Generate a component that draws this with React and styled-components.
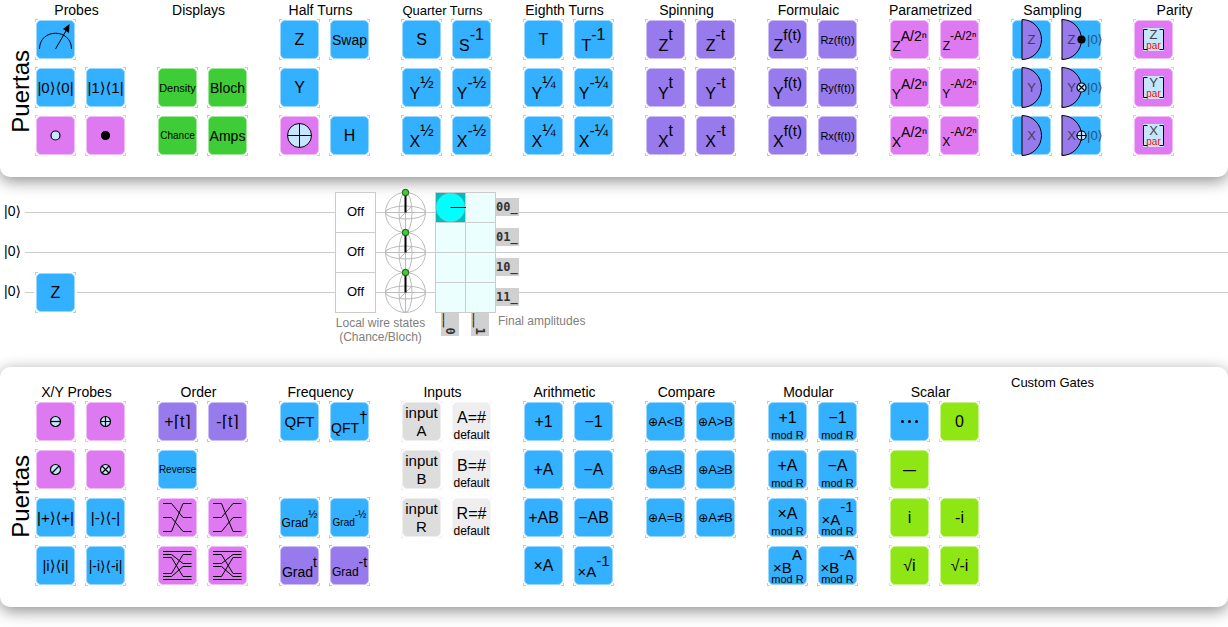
import React from "react";
import styled, { createGlobalStyle, css } from "styled-components";

const GlobalStyle = createGlobalStyle`
  *, *::before, *::after { box-sizing: border-box; }
  body {
    margin: 0;
    background: #fff;
    color: #000;
    font-family: "Liberation Sans", "DejaVu Sans", sans-serif;
    overflow-x: hidden;
  }
`;

const palette = {
  blue: { fill: "#33b0ff", edge: "#99d7ff" },
  purple: { fill: "#977aeb", edge: "#cbbcf5" },
  pink: { fill: "#df79f2", edge: "#efbcf8" },
  green: { fill: "#3ecd36", edge: "#9ee69a" },
  lime: { fill: "#8fe615", edge: "#c7f28a" },
  gray: { fill: "#dddddd", edge: "#eeeeee" },
  pale: { fill: "#eeeeee", edge: "#f6f6f6" },
};

/* ---------- page structure ---------- */

const Page = styled.main`
  display: flex;
  flex-direction: column;
  padding-bottom: 20px;
`;

const Panel = styled.section`
  display: flex;
  background: #fff;
  border-radius: ${(p) => (p.$top ? "0 0 10px 10px" : "10px")};
  padding: ${(p) => (p.$top ? "0 0 21px" : "5px 0 21px")};
  box-shadow: 0 4px 16px rgba(0, 0, 0, 0.45);
`;

const Rail = styled.h2`
  flex: none;
  display: flex;
  align-items: center;
  justify-content: center;
  width: 35px;
  margin: 0;
  padding: ${(p) => (p.$top ? 26 : 34)}px 0 0 7px;
  font-size: 24px;
  line-height: 28px;
  font-weight: 400;
`;

const RailText = styled.span`
  writing-mode: vertical-rl;
  transform: rotate(180deg);
`;

const Groups = styled.div`
  display: flex;
  gap: 31px;
  padding-top: ${(p) => (p.$top ? "0" : "10px")};
`;

const Group = styled.section`
  flex: none;
  width: 91px;
`;

const GroupTitle = styled.h3`
  display: flex;
  justify-content: ${(p) => (p.$start ? "flex-start" : "center")};
  margin: ${(p) => (p.$start ? "-10px 0 0" : "0 8px 0 0")};
  padding-top: 2px;
  font-size: ${(p) => (p.$small ? 13 : 14)}px;
  line-height: 17px;
  font-weight: 400;
  white-space: nowrap;
`;

const GateGrid = styled.div`
  display: grid;
  grid-template-columns: repeat(2, 41px);
  grid-auto-rows: 41px;
  gap: 7px 9px;
`;

/* ---------- gates ---------- */

const ticks = css`
  background:
    linear-gradient(90deg, ${(p) => p.$c.edge} 3px, transparent 3px calc(100% - 3px), ${(p) => p.$c.edge} 0) top / 100% 1px no-repeat,
    linear-gradient(90deg, ${(p) => p.$c.edge} 3px, transparent 3px calc(100% - 3px), ${(p) => p.$c.edge} 0) bottom / 100% 1px no-repeat,
    linear-gradient(${(p) => p.$c.edge} 3px, transparent 3px calc(100% - 3px), ${(p) => p.$c.edge} 0) left / 1px 100% no-repeat,
    linear-gradient(${(p) => p.$c.edge} 3px, transparent 3px calc(100% - 3px), ${(p) => p.$c.edge} 0) right / 1px 100% no-repeat,
    #fff;
`;

const GateButton = styled.button`
  display: flex;
  width: 41px;
  height: 41px;
  padding: 1px;
  border: 0;
  color: #000;
  font-family: inherit;
  cursor: grab;
  ${ticks}
`;

const Face = styled.span`
  flex: 1;
  min-width: 0;
  height: 39px;
  display: flex;
  flex-direction: column;
  align-items: center;
  justify-content: center;
  border: 1px solid ${(p) => p.$c.edge};
  border-radius: 5px;
  background: ${(p) => p.$c.fill};
  white-space: nowrap;
`;

const Label = styled.span`
  font-size: ${(p) => p.$size}px;
  line-height: 18px;
  font-weight: ${(p) => (p.$bold ? 700 : 400)};
`;

const Small = styled.span`
  font-size: 12px;
`;

const Power = styled.span`
  display: flex;
  align-items: flex-start;
  padding-top: 2px;
  margin-bottom: ${(p) => (p.$tight ? -2 : 0)}px;
  line-height: 16px;
`;

const Base = styled.span`
  margin-top: ${(p) => p.$drop}px;
  font-size: ${(p) => p.$size}px;
`;

const Exponent = styled.span`
  font-size: ${(p) => p.$size}px;
`;

const Stack = styled.span`
  flex: 1;
  min-height: 0;
  display: flex;
  flex-direction: column;
  align-items: center;
  justify-content: flex-end;
`;

const StackMain = styled.span`
  display: flex;
  font-size: ${(p) => p.$size}px;
  line-height: ${(p) => (p.$even ? 18 : 24)}px;
`;

const StackNote = styled.span`
  font-size: ${(p) => p.$size}px;
  line-height: 10px;
`;

const Drawing = styled.svg`
  display: block;
  flex: none;
  overflow: visible;
  font-family: "Liberation Sans", "DejaVu Sans", sans-serif;
`;

function Gate({ color, name, children }) {
  const c = palette[color];
  return (
    <GateButton type="button" $c={c} aria-label={name}>
      <Face $c={c}>{children}</Face>
    </GateButton>
  );
}

const text = (color, value, size = 16, bold = false) => (
  <Gate color={color}>
    <Label $size={size} $bold={bold}>{value}</Label>
  </Gate>
);

const power = (color, base, exp, size = 16, expSize = 16, drop = 11) => (
  <Gate color={color}>
    <Power>
      <Base $size={size} $drop={drop}>{base}</Base>
      <Exponent $size={expSize}>{exp}</Exponent>
    </Power>
  </Gate>
);

const modular = (value) => (
  <Gate color="blue">
    <Stack>
      <StackMain $size={16}>{value}</StackMain>
      <StackNote $size={11}>mod R</StackNote>
    </Stack>
  </Gate>
);

const modularPower = (base, exp) => (
  <Gate color="blue">
    <Stack>
      <Power $tight>
        <Base $size={15} $drop={13}>{base}</Base>
        <Exponent $size={15}>{exp}</Exponent>
      </Power>
      <StackNote $size={11}>mod R</StackNote>
    </Stack>
  </Gate>
);

const input = (letter) => (
  <Gate color="gray">
    <StackMain $even $size={15}>input</StackMain>
    <StackMain $even $size={15}>{letter}</StackMain>
  </Gate>
);

const inputDefault = (letter) => (
  <Gate color="pale">
    <Stack>
      <StackMain $size={16}>{letter}=#</StackMain>
      <StackNote $size={12}>default</StackNote>
    </Stack>
  </Gate>
);

const compare = (rest) => (
  <Gate color="blue">
    <Label $size={13}><Small>⊕</Small>{rest}</Label>
  </Gate>
);

const controlMarks = {
  empty: "",
  minus: "M-5 0H5",
  plus: "M-5 0H5M0 -5V5",
  slash: "M-3.5 3.5L3.5 -3.5",
  cross: "M-3.5 3.5L3.5 -3.5M-3.5 -3.5L3.5 3.5",
};

function ControlMark({ kind, r = 5 }) {
  return (
    <g stroke="#000" strokeWidth="1.2" fill="none">
      <circle r={kind === "full" ? r - 1 : r} fill={kind === "full" ? "#000" : "#c4e7ff"} />
      {kind !== "full" && <path d={controlMarks[kind]} />}
    </g>
  );
}

const control = (kind, name) => (
  <Gate color="pink" name={name}>
    <Drawing width="37" height="37" viewBox="-18.5 -18.5 37 37" aria-hidden="true">
      <ControlMark kind={kind} r={kind === "empty" ? 4.5 : 5} />
    </Drawing>
  </Gate>
);

const wiring = (name, d) => (
  <Gate color="pink" name={name}>
    <Drawing width="37" height="37" viewBox="0 0 37 37" aria-hidden="true">
      <path d={d} fill="none" stroke="#000" strokeWidth="1" />
    </Drawing>
  </Gate>
);

const detector = (axis) => (
  <Gate color="blue" name={`${axis} detector`}>
    <Drawing width="37" height="37" viewBox="2 2 37 37">
      <path d="M11 0.5A19.5 20 0 0 1 11 40.5Z" fill={palette.purple.fill} stroke="#000" />
      <text x="20.5" y="25" fontSize="13" textAnchor="middle" fill="#443c5c">{axis}</text>
    </Drawing>
  </Gate>
);

const detectorReset = (axis, kind) => (
  <Gate color="blue" name={`${axis} detect and reset`}>
    <Drawing width="37" height="37" viewBox="2 2 37 37">
      <path d="M1 0.5A19.5 20 0 0 1 1 40.5Z" fill={palette.purple.fill} stroke="#000" />
      <text x="10.5" y="25" fontSize="13" textAnchor="middle" fill="#443c5c">{axis}</text>
      <text x="26" y="25" fontSize="13" fill="#235277">|0⟩</text>
      <g transform="translate(20.5 20.5)">
        <ControlMark kind={kind} r={4.5} />
      </g>
    </Drawing>
  </Gate>
);

const parity = (axis) => (
  <Gate color="pink" name={`${axis} parity`}>
    <Drawing width="37" height="37" viewBox="2 2 37 37">
      <rect x="10" y="9" width="21" height="23" fill="#c4e7ff" />
      <path d="M14.5 10.5H10.5V30.5H14.5M26.5 10.5H30.5V30.5H26.5" fill="none" stroke="#000" />
      <text x="20.5" y="20" fontSize="13" textAnchor="middle" fill="#444">{axis}</text>
      <text x="20.5" y="30" fontSize="10" textAnchor="middle" fill="#f00">par</text>
    </Drawing>
  </Gate>
);

const measure = (
  <Gate color="blue" name="Measurement">
    <Drawing width="37" height="37" viewBox="2 2 37 37" aria-hidden="true">
      <path d="M4.5 30C4.5 9 36.5 9 36.5 30M20.5 30L31.5 11" fill="none" stroke="#000" />
      <path d="M34.5 5L34 14L28 10Z" />
    </Drawing>
  </Gate>
);

const notGate = (
  <Gate color="pink" name="Not">
    <Drawing width="37" height="37" viewBox="-18.5 -18.5 37 37" aria-hidden="true">
      <circle r="12" fill="#c4e7ff" stroke="#000" />
      <path d="M-12 0H12M0 -12V12" stroke="#000" />
    </Drawing>
  </Gate>
);

const dots = (
  <Gate color="blue" name="Spacer">
    <Drawing width="37" height="37" viewBox="-18.5 -18.5 37 37" aria-hidden="true">
      <circle cx="-7" r="1.5" /><circle r="1.5" /><circle cx="7" r="1.5" />
    </Drawing>
  </Gate>
);

const topGroups = [
  { title: "Probes", gates: [
    measure, null,
    text("blue", "|0⟩⟨0|", 15), text("blue", "|1⟩⟨1|", 15),
    control("empty", "Anti-control"), control("full", "Control"),
  ] },
  { title: "Displays", gates: [
    null, null,
    text("green", "Density", 11), text("green", "Bloch", 14),
    text("green", "Chance", 10), text("green", "Amps", 14),
  ] },
  { title: "Half Turns", gates: [
    text("blue", "Z"), text("blue", "Swap", 14),
    text("blue", "Y"), null,
    notGate, text("blue", "H"),
  ] },
  { title: "Quarter Turns", small: true, gates: [
    text("blue", "S"), power("blue", "S", "-1"),
    power("blue", "Y", "½"), power("blue", "Y", "-½"),
    power("blue", "X", "½"), power("blue", "X", "-½"),
  ] },
  { title: "Eighth Turns", gates: [
    text("blue", "T"), power("blue", "T", "-1"),
    power("blue", "Y", "¼"), power("blue", "Y", "-¼"),
    power("blue", "X", "¼"), power("blue", "X", "-¼"),
  ] },
  { title: "Spinning", gates: ["Z", "Y", "X"].flatMap((a) => [
    power("purple", a, "t"), power("purple", a, "-t"),
  ]) },
  { title: "Formulaic", gates: ["Z", "Y", "X"].flatMap((a) => [
    power("purple", a, "f(t)", 16, 15), text("purple", `R${a.toLowerCase()}(f(t))`, 11),
  ]) },
  { title: "Parametrized", gates: ["Z", "Y", "X"].flatMap((a) => [
    power("pink", a, "A/2ⁿ", 14, 14, 10), power("pink", a, "-A/2ⁿ", 12, 12, 10),
  ]) },
  { title: "Sampling", gates: [
    detector("Z"), detectorReset("Z", "full"),
    detector("Y"), detectorReset("Y", "cross"),
    detector("X"), detectorReset("X", "plus"),
  ] },
  { title: "Parity", gates: [parity("Z"), null, parity("Y"), null, parity("X"), null] },
];

const bottomGroups = [
  { title: "X/Y Probes", gates: [
    control("minus", "Minus control"), control("plus", "Plus control"),
    control("slash", "Cross anti-control"), control("cross", "Cross control"),
    text("blue", "|+⟩⟨+|", 15), text("blue", "|-⟩⟨-|", 15),
    text("blue", "|i⟩⟨i|", 15), text("blue", "|-i⟩⟨-i|", 14),
  ] },
  { title: "Order", gates: [
    text("purple", "+⌈t⌉"), text("purple", "-⌈t⌉"),
    text("blue", "Reverse", 10), null,
    wiring("Interleave", "M4 4.5H12.5L24 18.5H32.5M4 18.5H12.5L24 32.5H32.5M4 32.5H12.5L24 4.5H32.5"),
    wiring("Deinterleave", "M4 4.5H12.5L24 32.5H32.5M4 18.5H12.5L24 4.5H32.5M4 32.5H12.5L24 18.5H32.5"),
    wiring("Interleave halves", "M4 4.5H32.5M4 7.5H12.5L24 16.5H32.5M4 10.5H12.5L24 29.5H32.5M4 26.5H12.5L24 7.5H32.5M4 29.5H12.5L24 19.5H32.5M4 32.5H32.5"),
    wiring("Deinterleave halves", "M4 4.5H32.5M32.5 7.5H24L12.5 16.5H4M32.5 10.5H24L12.5 29.5H4M32.5 26.5H24L12.5 7.5H4M32.5 29.5H24L12.5 19.5H4M4 32.5H32.5"),
  ] },
  { title: "Frequency", gates: [
    text("blue", "QFT", 15), power("blue", "QFT", "†", 14, 16, 10),
    null, null,
    power("blue", "Grad", "½", 12, 11, 9), power("blue", "Grad", "-½", 10, 10, 8),
    power("purple", "Grad", "t", 14, 14, 10), power("purple", "Grad", "-t", 12, 14, 10),
  ] },
  { title: "Inputs", gates: ["A", "B", "R"].flatMap((l) => [input(l), inputDefault(l)]) },
  { title: "Arithmetic", gates: [
    text("blue", "+1"), text("blue", "−1"),
    text("blue", "+A"), text("blue", "−A"),
    text("blue", "+AB"), text("blue", "−AB"),
    text("blue", "×A"), power("blue", "×A", "-1", 15, 15),
  ] },
  { title: "Compare", gates: ["A<B", "A>B", "A≤B", "A≥B", "A=B", "A≠B"].map(compare) },
  { title: "Modular", gates: [
    modular("+1"), modular("−1"),
    modular("+A"), modular("−A"),
    modular("×A"), modularPower("×A", "-1"),
    modularPower("×B", "A"), modularPower("×B", "-A"),
  ] },
  { title: "Scalar", gates: [
    dots, text("lime", "0"),
    text("lime", "—", 13, true), null,
    text("lime", "i"), text("lime", "-i"),
    text("lime", "√i"), text("lime", "√-i"),
  ] },
  { title: "Custom Gates", small: true, start: true, gates: [] },
];

function Toolbox({ groups, top }) {
  return (
    <Panel $top={top}>
      <Rail $top={top}><RailText>Puertas</RailText></Rail>
      <Groups $top={top}>
        {groups.map((g) => (
          <Group key={g.title}>
            <GroupTitle $small={g.small} $start={g.start}>{g.title}</GroupTitle>
            <GateGrid>
              {g.gates.map((gate, i) => <React.Fragment key={i}>{gate || <span />}</React.Fragment>)}
            </GateGrid>
          </Group>
        ))}
      </Groups>
    </Panel>
  );
}

/* ---------- circuit ---------- */

const CircuitArea = styled.section`
  display: grid;
  padding: 15px 0 23px;
  > * { grid-area: 1 / 1; }
`;

const Wires = styled.div`
  display: flex;
  flex-direction: column;
`;

const Wire = styled.div`
  display: flex;
  align-items: center;
  height: 40px;
  padding-left: 4px;
`;

const Ket = styled.span`
  flex: none;
  width: 21px;
  padding-bottom: 2px;
  font-size: 14px;
  line-height: 18px;
  white-space: nowrap;
`;

const WireLine = styled.span`
  flex: 1;
  height: 1px;
  margin-top: 1px;
  background: #ccc;
`;

const Columns = styled.div`
  display: flex;
  align-items: flex-start;
  padding-left: 35px;
`;

const GateColumn = styled.div`
  display: flex;
  flex-direction: column;
  padding-top: 80px;
  width: 300px;
`;

const PlacedGate = styled.div`
  align-self: flex-start;
  box-shadow: 0 0 0 1px #fff;
`;

const Figure = styled.figure`
  margin: 0;
  width: 91px;
`;

const StateRow = styled.div`
  display: flex;
  gap: 9px;
`;

const ChanceList = styled.div`
  display: flex;
  flex-direction: column;
  width: 41px;
  height: 121px;
  border: 1px solid #ccc;
  background: #fff;
`;

const Chance = styled.span`
  flex: 1;
  display: flex;
  align-items: center;
  justify-content: center;
  padding-bottom: 2px;
  font-size: 13px;
  & + & { border-top: 1px solid #ccc; }
`;

const Caption = styled.figcaption`
  display: flex;
  flex-direction: column;
  align-items: center;
  padding-top: 3px;
  color: #808080;
  font-size: 12px;
  line-height: 14px;
  white-space: nowrap;
`;

const Amplitudes = styled.figure`
  display: grid;
  grid-template-columns: 61px auto;
  align-items: start;
  margin: 0 0 0 9px;
`;

const AmpGrid = styled.div`
  display: grid;
  grid-template-columns: repeat(2, 29px);
  grid-auto-rows: 29px;
  gap: 1px;
  padding: 1px;
  background: #ccc;
`;

const AmpCell = styled.span`
  background: ${(p) => (p.$on ? "#00bdbd" : "#ebffff")};
`;

const RowLabels = styled.div`
  display: flex;
  flex-direction: column;
  gap: 12px;
  padding-top: 6px;
`;

const ColumnLabels = styled.div`
  display: flex;
  gap: 12px;
  padding-left: 6px;
`;

const StateTag = styled.span`
  width: ${(p) => (p.$vertical ? 18 : 23)}px;
  height: ${(p) => (p.$vertical ? 23 : 18)}px;
  background: #d0d0d0;
  color: #333;
  font-family: "DejaVu Sans Mono", monospace;
  font-size: 12px;
  font-weight: 700;
  line-height: 18px;
  writing-mode: ${(p) => (p.$vertical ? "vertical-rl" : "horizontal-tb")};
`;

const AmpCaption = styled(Caption)`
  align-items: flex-start;
  padding: 1px 0 0 2px;
`;

function BlochSpheres({ count }) {
  return (
    <Drawing width="41" height="121" viewBox="0 0 41 121" role="img" aria-label="Bloch spheres">
      {Array.from({ length: count }, (_, i) => (
        <g key={i} transform={`translate(20.5 ${20.5 + i * 40})`} fill="none" stroke="#bbb">
          <circle r="20" fill="#fff" />
          <ellipse rx="20" ry="6.5" />
          <ellipse rx="6.5" ry="20" />
          <path d="M-20 0H20M0 -20V20M-6 6L6 -6" />
        </g>
      ))}
      {Array.from({ length: count }, (_, i) => (
        <g key={i} transform={`translate(20.5 ${20.5 + i * 40})`}>
          <path d="M0 0V-20" stroke="#000" strokeWidth="2" />
          <circle cy="-20" r="3.2" fill="#3ecd36" stroke="#1d4a1b" />
        </g>
      ))}
    </Drawing>
  );
}

function Circuit() {
  return (
    <CircuitArea>
      <Wires>
        {[0, 1, 2].map((i) => (
          <Wire key={i}><Ket>|0⟩</Ket><WireLine /></Wire>
        ))}
      </Wires>
      <Columns>
        <GateColumn>
          <PlacedGate>{text("blue", "Z")}</PlacedGate>
        </GateColumn>
        <Figure>
          <StateRow>
            <ChanceList>
              <Chance>Off</Chance><Chance>Off</Chance><Chance>Off</Chance>
            </ChanceList>
            <BlochSpheres count={3} />
          </StateRow>
          <Caption><span>Local wire states</span><span>(Chance/Bloch)</span></Caption>
        </Figure>
        <Amplitudes>
          <AmpGrid>
            <AmpCell $on>
              <Drawing width="29" height="29" viewBox="0 0 29 29" role="img" aria-label="Amplitude 1">
                <circle cx="14.5" cy="14.5" r="14.3" fill="#0ff" stroke="#7fc4c4" strokeWidth="0.6" />
                <path d="M14.5 14.5H30" stroke="#000" />
              </Drawing>
            </AmpCell>
            {Array.from({ length: 7 }, (_, i) => <AmpCell key={i} />)}
          </AmpGrid>
          <RowLabels>
            {["00_", "01_", "10_", "11_"].map((l) => <StateTag key={l}>{l}</StateTag>)}
          </RowLabels>
          <ColumnLabels>
            <StateTag $vertical>__0</StateTag>
            <StateTag $vertical>__1</StateTag>
          </ColumnLabels>
          <AmpCaption>Final amplitudes</AmpCaption>
        </Amplitudes>
      </Columns>
    </CircuitArea>
  );
}

export default function App() {
  return (
    <Page>
      <GlobalStyle />
      <Toolbox groups={topGroups} top />
      <Circuit />
      <Toolbox groups={bottomGroups} />
    </Page>
  );
}
